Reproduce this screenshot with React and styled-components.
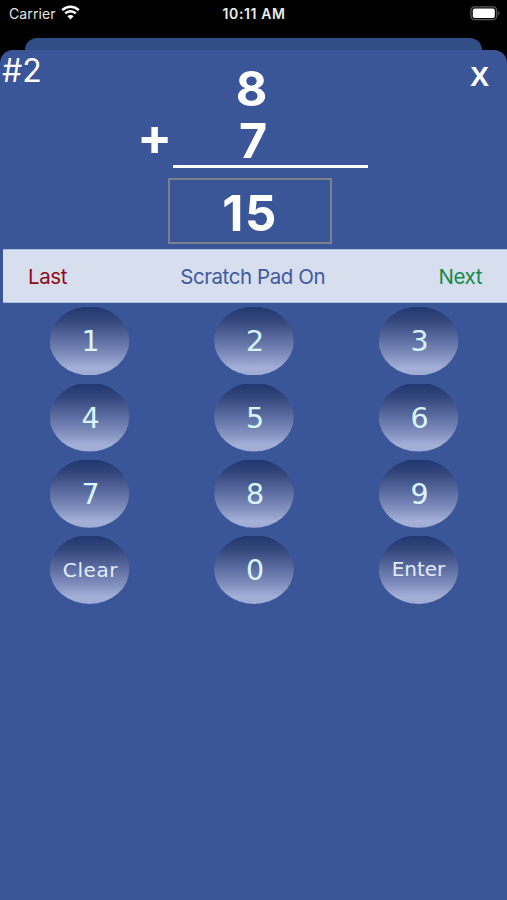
import React, { useState } from "react";
import styled, { createGlobalStyle } from "styled-components";

const keys = ["1", "2", "3", "4", "5", "6", "7", "8", "9", "Clear", "0", "Enter"];

const WifiIcon = () => (
  <svg width="19" height="15" viewBox="0 0 19 15" fill="none">
    <path d="M1.2 5.2a11.8 11.8 0 0 1 16.6 0" stroke="#fff" strokeWidth="2.6" />
    <path d="M4.2 8.4a7.5 7.5 0 0 1 10.6 0" stroke="#fff" strokeWidth="2.4" />
    <path d="M9.5 14.4 6.4 11.2a4.4 4.4 0 0 1 6.2 0z" fill="#fff" />
  </svg>
);

const BatteryIcon = () => (
  <svg width="31" height="15" viewBox="0 0 31 15">
    <rect
      x="0.9"
      y="0.9"
      width="25.8"
      height="12.8"
      rx="3.6"
      fill="none"
      stroke="#5c5c5c"
      strokeWidth="1.2"
    />
    <rect x="2.8" y="2.6" width="22" height="9.4" rx="1.8" fill="#fff" />
    <path d="M28.2 5.2c1.7.7 1.7 3.5 0 4.2z" fill="#5c5c5c" />
  </svg>
);

const App = () => {
  const [answer, setAnswer] = useState("15");
  const [scratchPad, setScratchPad] = useState(true);

  const handleKey = key => {
    if (key === "Enter") return;
    setAnswer(key === "Clear" ? "" : (answer + key).slice(-3));
  };

  return (
    <Screen>
      <GlobalStyle />
      <StatusBar>
        <Carrier>
          Carrier
          <WifiIcon />
        </Carrier>
        <Clock>10:11 AM</Clock>
        <Battery>
          <BatteryIcon />
        </Battery>
      </StatusBar>
      <BackCard />
      <Card>
        <Header>
          <ProblemNumber>#2</ProblemNumber>
          <Problem>
            <Operand>8</Operand>
            <OperandRow>
              <Operator>+</Operator>
              <Operand $indent={3}>7</Operand>
            </OperandRow>
            <Rule />
            <Answer>{answer}</Answer>
          </Problem>
          <Close>X</Close>
        </Header>
        <Toolbar>
          <ToolbarButton $color="#8d0b17">Last</ToolbarButton>
          <ToolbarButton
            $color="#4059a0"
            onClick={() => setScratchPad(!scratchPad)}
          >
            Scratch Pad {scratchPad ? "On" : "Off"}
          </ToolbarButton>
          <ToolbarButton $color="#128a48">Next</ToolbarButton>
        </Toolbar>
        <Keypad>
          {keys.map(key => (
            <Key key={key} onClick={() => handleKey(key)}>
              <KeyLabel $word={key.length > 1} $raised={key === "Enter"}>
                {key}
              </KeyLabel>
            </Key>
          ))}
        </Keypad>
      </Card>
    </Screen>
  );
};

const GlobalStyle = createGlobalStyle`
  * {
    box-sizing: border-box;
  }
  body {
    margin: 0;
    background: #000;
    font-family: Inter, "Liberation Sans", sans-serif;
  }
  button {
    padding: 0;
    border: 0;
    background: none;
    font-family: inherit;
  }
`;

const Screen = styled.div`
  display: flex;
  flex-direction: column;
  width: 507px;
  height: 900px;
  overflow: hidden;
  background: #000;
`;

const StatusBar = styled.div`
  display: grid;
  grid-template-columns: 1fr auto 1fr;
  align-items: center;
  height: 38px;
  padding: 0 6px 11px 9px;
  color: #fff;
  font-size: 14px;
`;

const Carrier = styled.div`
  display: flex;
  align-items: center;
  gap: 5px;
  color: #e4e4e4;
  letter-spacing: 0.1px;
  svg {
    margin-top: -3px;
  }
`;

const Clock = styled.div`
  margin-right: 2px;
  color: #ececec;
  font-weight: 600;
  letter-spacing: 0.6px;
`;

const Battery = styled.div`
  display: flex;
  justify-content: flex-end;
`;

const BackCard = styled.div`
  flex: none;
  height: 12px;
  margin: 0 25px;
  border-radius: 12px 12px 0 0;
  background: #324e86;
`;

const Card = styled.div`
  flex: 1;
  border-radius: 13px 13px 0 0;
  background: #3a5698;
`;

const Header = styled.div`
  display: grid;
  grid-template-columns: 137px 232px 1fr;
  height: 199px;
  color: #fff;
`;

const ProblemNumber = styled.div`
  padding: 1px 0 0 2px;
  font-size: 32px;
  line-height: 40px;
`;

const Problem = styled.div`
  display: flex;
  flex-direction: column;
  padding-top: 13px;
`;

const Operand = styled.div`
  width: 229px;
  padding-left: ${props => props.$indent || 0}px;
  font-size: 48.5px;
  font-weight: 650;
  line-height: 52px;
  text-align: center;
`;

const OperandRow = styled.div`
  display: grid;
  > * {
    grid-area: 1 / 1;
  }
`;

const Operator = styled.div`
  font-size: 52px;
  font-weight: 700;
  line-height: 44px;
`;

const Rule = styled.div`
  width: 195px;
  height: 3px;
  margin: -2px 0 0 36px;
  background: #fff;
`;

const Answer = styled.div`
  width: 164px;
  height: 66px;
  margin: 10px 0 0 31px;
  border: 2px solid #7b808b;
  font-size: 49px;
  font-weight: 700;
  letter-spacing: 1.6px;
  line-height: 67px;
  text-align: center;
`;

const Close = styled.button`
  justify-self: end;
  align-self: start;
  margin: 11px 18px 0 0;
  color: #fff;
  font-family: "Liberation Sans", sans-serif;
  font-size: 28px;
  font-weight: 700;
  line-height: 32px;
`;

const Toolbar = styled.div`
  display: flex;
  align-items: center;
  justify-content: space-between;
  height: 54px;
  margin-left: 3px;
  padding: 0 25px;
  border-top: 1px solid #aebbdc;
  border-bottom: 1px solid #aebbdc;
  background: #d7dfee;
`;

const ToolbarButton = styled.button`
  color: ${props => props.$color};
  font-size: 20.5px;
  letter-spacing: -0.42px;
`;

const Keypad = styled.div`
  display: grid;
  grid-template-columns: repeat(3, 80px);
  column-gap: 84.5px;
  row-gap: 8.2px;
  padding: 4.4px 0 0 49.5px;
`;

const Key = styled.button`
  display: flex;
  align-items: center;
  justify-content: center;
  height: 68px;
  background: linear-gradient(
    #20376f 0%,
    #34477d 20%,
    #5c6da1 48%,
    #8290be 72%,
    #a4b0d8 90%,
    #9eabd4 100%
  );
  clip-path: ellipse(39.8px 34.5px at 50% 33.5px);
`;

const KeyLabel = styled.span`
  margin-top: ${props => (props.$raised ? -2 : 1)}px;
  padding-left: ${props => (props.$raised ? 0 : 2)}px;
  color: ${props => (props.$word ? "#e2edfc" : "#d9f5ff")};
  font-family: "DejaVu Sans", sans-serif;
  font-size: ${props => (props.$word ? 20 : 28.5)}px;
  letter-spacing: ${props => (props.$word && !props.$raised ? 0.6 : 0)}px;
`;

export default App;
